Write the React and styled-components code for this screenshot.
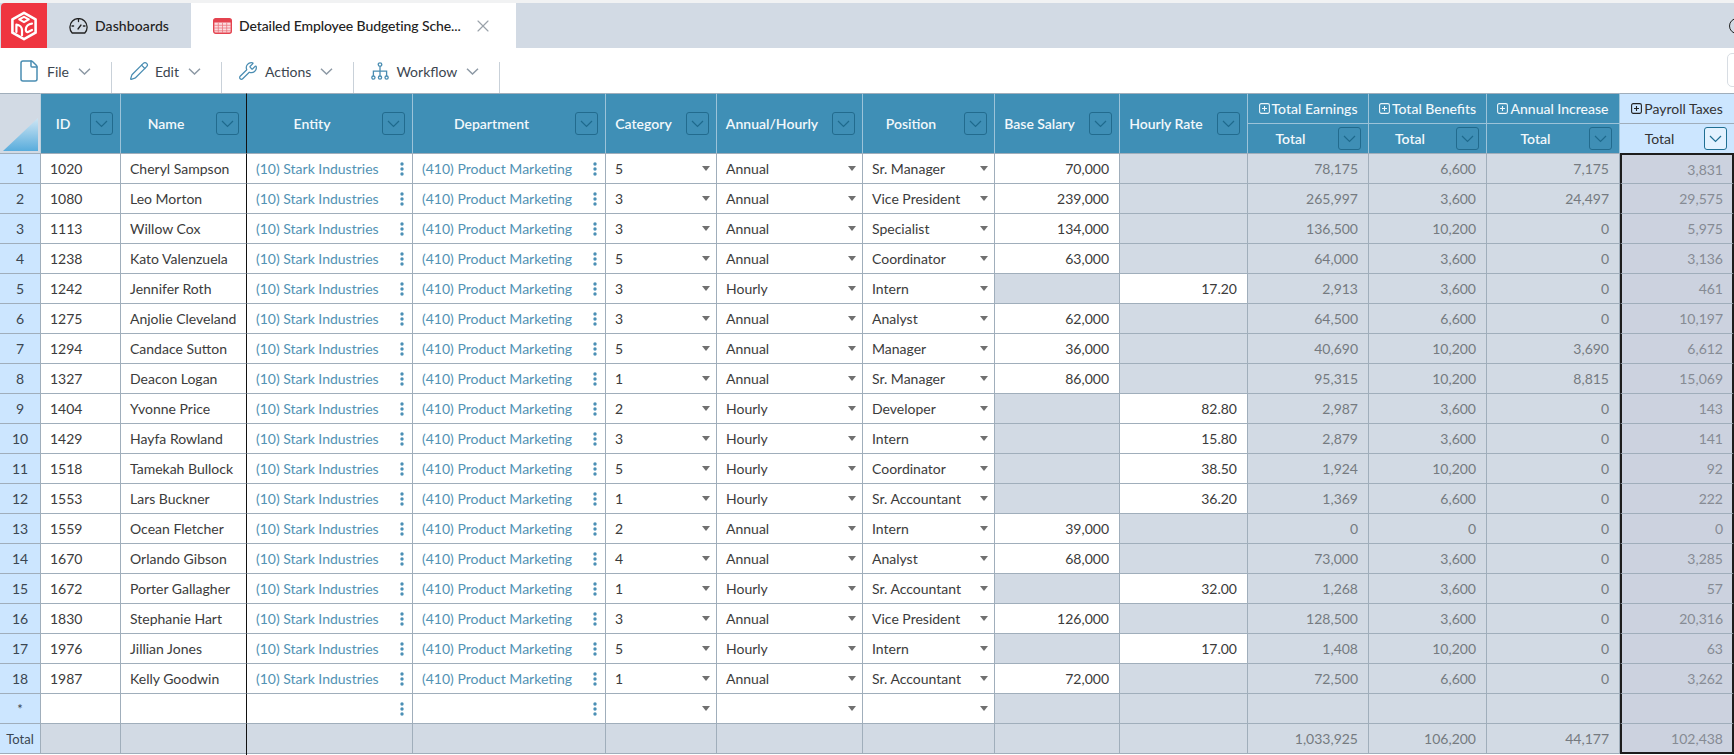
import React from 'react';
import styled, { createGlobalStyle } from 'styled-components';
import { File, Pencil, Wrench, X } from 'lucide-react';

const Global = createGlobalStyle`
  html, body { margin: 0; padding: 0; background: #fff; overflow: hidden; }
  body { font-family: Lato, "Open Sans", sans-serif; font-size: 14px; color: #333; }
`;

const Page = styled.div`
  width: 1734px; height: 755px; overflow: hidden; display: flex; flex-direction: column;
  padding-top: 3px; box-sizing: border-box; background: #fff;
  box-shadow: inset 0 3px 0 #f1f2f3;
`;
const TabBar = styled.div`
  height: 45px; display: flex; align-items: stretch; background: #d2dae4; flex: none; position: relative;
`;
const LogoBox = styled.div`
  width: 46px; margin-left: 1px; box-sizing: border-box; background: #ef3540; border-top-left-radius: 4px;
  display: flex; align-items: center; justify-content: center;
`;
const Tab = styled.div`
  display: flex; align-items: center; box-sizing: border-box;
  width: ${p => p.$w}px; padding-left: ${p => p.$pad}px; gap: ${p => p.$gap}px;
  background: ${p => p.$active ? '#fff' : '#d2dae4'};
  font-size: 14px; font-weight: 500; color: #222;
  letter-spacing: ${p => p.$active ? '-0.1px' : '0.1px'};
`;
const TabClose = styled.span`
  display: flex; margin-left: 5px; color: #9aa2aa;
`;
const TabSpacer = styled.div` flex: 1; `;
const Ring = styled.div`
  width: 16px; height: 16px; border-radius: 50%; border: 1.6px solid #222; flex: none;
  align-self: center; margin-right: -11px; box-sizing: border-box;
`;
const Toolbar = styled.div`
  height: 45px; flex: none; display: flex; align-items: flex-end; background: #fff; color: #3c4650;
`;
const ToolItem = styled.div`
  height: 31px; box-sizing: border-box; padding: 0 ${p => p.$end || 18}px 13px ${p => p.$pad}px;
  border-right: 1px solid #c9d1d9; display: flex; align-items: center;
  font-size: 14px;
  svg.ti { margin-right: ${p => p.$gap || 7}px; color: #4a8db2; flex: none; }
`;
const ToolChevron = styled.svg` margin-left: 9px; flex: none; `;
const ToolSpacer = styled.div` flex: 1; `;
const SearchBox = styled.div`
  width: 60px; height: 34px; margin-right: -53px; margin-bottom: 6px; box-sizing: border-box;
  border: 1px solid #d8dde3; border-radius: 5px; flex: none;
`;
const Grid = styled.div`
  display: grid; flex: none; width: 1734px;
  grid-template-columns: 41px 80px 126px 166px 193px 111px 146px 132px 125px 128px 121px 118px 133px 114px;
  grid-template-rows: repeat(21, 30px) 31px;
  font-size: 14px; color: #3b3b3b;
`;
const Cell = styled.div`
  box-sizing: border-box; border-top: 1px solid #a0aebb; border-right: 1px solid #a0aebb;
  display: flex; align-items: center; min-width: 0; white-space: nowrap; position: relative;
  background: ${p => p.$grey ? '#d2dae4' : '#fff'};
  ${p => p.$divider && 'border-right-color: #111;'}
  ${p => p.$last && 'border-bottom: 1px solid #a0aebb;'}
`;
const Corner = styled.div`
  grid-row: span 2; box-sizing: border-box; background: #d2dae4; display: flex; align-items: flex-end;
  border-top: 1px solid #a0aebb; border-right: 1px solid #bcd0de; padding: 0 2px 2px 3px;
`;
const CornerTriangle = styled.div`
  width: 35px; height: 33px;
  background: linear-gradient(#cfe6f4, #58acdc);
  clip-path: polygon(0 100%, 100% 0, 100% 100%);
`;
const HeadCell = styled.div`
  box-sizing: border-box; display: flex; align-items: center; padding-right: 7px;
  grid-row: ${p => p.$span ? 'span 2' : 'auto'};
  background: ${p => p.$sel ? '#cce6ff' : '#3f8fb6'};
  color: ${p => p.$sel ? '#333' : '#f2f8fb'};
  border-right: 1px solid ${p => p.$divider ? '#111' : p.$sel ? '#a0aebb' : '#9cc3d9'};
  border-top: 1px solid ${p => p.$top ? '#a0aebb' : (p.$sel ? '#a0aebb' : '#9cc3d9')};
  font-weight: 600;
  ${p => p.$sel && 'font-weight: 400; border-right: 0;'}
`;
const HeadLabel = styled.span` flex: 1; text-align: center; white-space: nowrap; margin-right: 5px; `;
const GroupCell = styled(HeadCell)`
  justify-content: center; padding: 0; gap: 2px; font-weight: ${p => p.$sel ? 400 : 500};
`;
const PlusBox = styled.svg` flex: none; `;
const FilterButton = styled.div`
  width: 23px; height: 23px; flex: none; box-sizing: border-box; border-radius: 3px;
  border: 1px solid ${p => p.$sel ? '#1f6f93' : '#226b8e'};
  display: flex; align-items: center; justify-content: center;
  background: ${p => p.$sel ? '#e3f2ff' : 'transparent'};
  color: ${p => p.$sel ? '#1f6f93' : '#1f6a8d'};
`;
const RowHead = styled(Cell)`
  background: #cce6ff; justify-content: center; color: #3b4651;
  ${p => p.$small && 'font-size: 13px;'}
`;
const TextCell = styled(Cell)` padding-left: 9px; `;
const LinkCell = styled(Cell)`
  justify-content: space-between; padding: 0 8px 0 9px; color: #5192b4;
`;
const Dots = styled.svg` flex: none; margin-left: auto; `;
const SelectCell = styled(Cell)`
  justify-content: space-between; padding: 0 6px 0 9px;
`;
const Caret = styled.span`
  width: 0; height: 0; flex: none; margin-left: auto;
  border-left: 4.5px solid transparent; border-right: 4.5px solid transparent; border-top: 5.5px solid #707070;
`;
const NumCell = styled(Cell)`
  justify-content: flex-end; padding-right: 10px; color: ${p => p.$grey ? '#757a80' : '#3b3b3b'};
`;
const TaxCell = styled(Cell)`
  justify-content: flex-end; padding-right: 9px; color: #868b94; background: #ccd2df;
  border-left: 2px solid #1c1c1c; border-right: 2px solid #1c1c1c;
  ${p => p.$first && 'border-top: 2px solid #1c1c1c;'}
  ${p => p.$last && 'border-bottom: 2px solid #1c1c1c;'}
`;
const DividerTail = styled.span`
  position: absolute; right: -1px; top: 100%; width: 1px; height: 3px; background: #111;
`;

const Chevron = ({ size = 13, color = '#8d99a5' }) => (
  <ToolChevron width={size} height={7} viewBox="0 0 13 7" fill="none">
    <path d="M1 .8l5.5 5.2L12 .8" stroke={color} strokeWidth="1.5" />
  </ToolChevron>
);
const BtnChevron = () => (
  <svg width="13" height="8" viewBox="0 0 13 8" fill="none"><path d="M1 1l5.5 5.5L12 1" stroke="currentColor" strokeWidth="1.2" /></svg>
);
const Filter = ({ sel }) => <FilterButton $sel={sel}><BtnChevron /></FilterButton>;
const Plus = ({ color }) => (
  <PlusBox width="11" height="11" viewBox="0 0 11 11" fill="none" stroke={color}>
    <rect x=".6" y=".6" width="9.8" height="9.8" rx="1.6" strokeWidth="1.1" />
    <path d="M5.5 3v5M3 5.5h5" strokeWidth="1.1" />
  </PlusBox>
);
const DotsIcon = () => (
  <Dots width="4" height="14" viewBox="0 0 4 14" fill="#4a8fb5">
    <circle cx="2" cy="2" r="1.7" /><circle cx="2" cy="7" r="1.7" /><circle cx="2" cy="12" r="1.7" />
  </Dots>
);
const Logo = () => (
  <svg width="28" height="30" viewBox="0 0 28 30" fill="none" stroke="#fff" strokeWidth="2.6" strokeLinejoin="round" strokeLinecap="round">
    <path d="M14 1.8L25.6 8.3V21.7L14 28.2 2.4 21.7V8.3Z" />
    <path d="M9.2 8.4L14 5.8l4.8 2.6L14 11.2Z" strokeWidth="2" />
    <path d="M6.4 21v-7.4c3.4.2 5.6 2.8 5.6 5.6v5" strokeWidth="2.2" />
    <path d="M22 12.6c-3.8.4-6.2 3-6.2 6 0 2 1 2.8 2.2 2.4l4-2" strokeWidth="2.2" />
  </svg>
);
const GaugeIcon = () => (
  <svg width="19" height="16" viewBox="0 0 19 16" fill="none" stroke="#222" strokeWidth="1.3" strokeLinecap="round">
    <path d="M3.2 15A8.6 8.6 0 1 1 15.8 15Z" />
    <path d="M9.5 1.5v2M3 8h1.6M14.4 8H16M9 11l3-4" />
  </svg>
);
const SheetIcon = () => (
  <svg width="19" height="16" viewBox="0 0 19 16" fill="none">
    <rect x=".7" y=".7" width="17.6" height="14.6" rx="2" fill="#fbdde0" stroke="#e4434f" strokeWidth="1.4" />
    <path d="M.7 2.7a2 2 0 0 1 2-2h13.6a2 2 0 0 1 2 2V4.6H.7Z" fill="#e4434f" />
    <path d="M1 7.3h17M1 10h17M1 12.8h17M5.3 4.6V15M9.5 4.6V15M13.7 4.6V15" stroke="#ec7680" strokeWidth=".8" />
  </svg>
);
const WorkflowIcon = () => (
  <svg className="ti" width="18" height="18" viewBox="0 0 18 18" fill="none" stroke="currentColor" strokeWidth="1.3">
    <circle cx="9" cy="2.6" r="1.8" />
    <path d="M9 4.4V14M2.4 14V9.2h13.2V14" />
    <circle cx="2.4" cy="15.6" r="1.6" /><circle cx="9" cy="15.6" r="1.6" /><circle cx="15.6" cy="15.6" r="1.6" />
  </svg>
);

const rows = [
  [1020,'Cheryl Sampson',5,'Annual','Sr. Manager','70,000','', '78,175','6,600','7,175','3,831'],
  [1080,'Leo Morton',3,'Annual','Vice President','239,000','', '265,997','3,600','24,497','29,575'],
  [1113,'Willow Cox',3,'Annual','Specialist','134,000','', '136,500','10,200','0','5,975'],
  [1238,'Kato Valenzuela',5,'Annual','Coordinator','63,000','', '64,000','3,600','0','3,136'],
  [1242,'Jennifer Roth',3,'Hourly','Intern','', '17.20','2,913','3,600','0','461'],
  [1275,'Anjolie Cleveland',3,'Annual','Analyst','62,000','', '64,500','6,600','0','10,197'],
  [1294,'Candace Sutton',5,'Annual','Manager','36,000','', '40,690','10,200','3,690','6,612'],
  [1327,'Deacon Logan',1,'Annual','Sr. Manager','86,000','', '95,315','10,200','8,815','15,069'],
  [1404,'Yvonne Price',2,'Hourly','Developer','', '82.80','2,987','3,600','0','143'],
  [1429,'Hayfa Rowland',3,'Hourly','Intern','', '15.80','2,879','3,600','0','141'],
  [1518,'Tamekah Bullock',5,'Hourly','Coordinator','', '38.50','1,924','10,200','0','92'],
  [1553,'Lars Buckner',1,'Hourly','Sr. Accountant','', '36.20','1,369','6,600','0','222'],
  [1559,'Ocean Fletcher',2,'Annual','Intern','39,000','', '0','0','0','0'],
  [1670,'Orlando Gibson',4,'Annual','Analyst','68,000','', '73,000','3,600','0','3,285'],
  [1672,'Porter Gallagher',1,'Hourly','Sr. Accountant','', '32.00','1,268','3,600','0','57'],
  [1830,'Stephanie Hart',3,'Annual','Vice President','126,000','', '128,500','3,600','0','20,316'],
  [1976,'Jillian Jones',5,'Hourly','Intern','', '17.00','1,408','10,200','0','63'],
  [1987,'Kelly Goodwin',1,'Annual','Sr. Accountant','72,000','', '72,500','6,600','0','3,262'],
];

const singleHeads = ['ID','Name','Entity','Department','Category','Annual/Hourly','Position','Base Salary','Hourly Rate'];
const groups = ['Total Earnings','Total Benefits','Annual Increase','Payroll Taxes'];

export default function App() {
  return (
    <Page>
      <Global />
      <TabBar>
        <LogoBox><Logo /></LogoBox>
        <Tab $w={144} $pad={22} $gap={7}><GaugeIcon />Dashboards</Tab>
        <Tab $w={325} $pad={22} $gap={7} $active><SheetIcon />Detailed Employee Budgeting Sche...<TabClose><X size={20} strokeWidth={1.4} /></TabClose></Tab>
        <TabSpacer />
        <Ring />
      </TabBar>
      <Toolbar>
        <ToolItem $pad={17} $end={20} $gap={6}><File className="ti" size={24} strokeWidth={1.5} />File<Chevron /></ToolItem>
        <ToolItem $pad={17} $end={20} $gap={6}><Pencil className="ti" size={20} strokeWidth={1.5} />Edit<Chevron /></ToolItem>
        <ToolItem $pad={16} $end={20} $gap={7}><Wrench className="ti" size={20} strokeWidth={1.5} />Actions<Chevron /></ToolItem>
        <ToolItem $pad={17} $end={20} $gap={7}><WorkflowIcon />Workflow<Chevron /></ToolItem>
        <ToolSpacer />
        <SearchBox />
      </Toolbar>
      <Grid>
        <Corner><CornerTriangle /></Corner>
        {singleHeads.map(h => (
          <HeadCell key={h} $span $top $divider={h === 'Name'}><HeadLabel>{h}</HeadLabel><Filter /></HeadCell>
        ))}
        {groups.map((g, i) => (
          <GroupCell key={g} $top $sel={i === 3}><Plus color={i === 3 ? '#222' : '#eef6fa'} />{g}</GroupCell>
        ))}
        {groups.map((g, i) => (
          <HeadCell key={g} $sel={i === 3}><HeadLabel>Total</HeadLabel><Filter sel={i === 3} /></HeadCell>
        ))}
        {rows.map((r, i) => (
          <React.Fragment key={r[0]}>
            <RowHead>{i + 1}</RowHead>
            <TextCell>{r[0]}</TextCell>
            <TextCell $divider>{r[1]}</TextCell>
            <LinkCell>(10) Stark Industries<DotsIcon /></LinkCell>
            <LinkCell>(410) Product Marketing<DotsIcon /></LinkCell>
            <SelectCell>{r[2]}<Caret /></SelectCell>
            <SelectCell>{r[3]}<Caret /></SelectCell>
            <SelectCell>{r[4]}<Caret /></SelectCell>
            <NumCell $grey={!r[5]}>{r[5]}</NumCell>
            <NumCell $grey={!r[6]}>{r[6]}</NumCell>
            <NumCell $grey>{r[7]}</NumCell>
            <NumCell $grey>{r[8]}</NumCell>
            <NumCell $grey>{r[9]}</NumCell>
            <TaxCell $first={i === 0}>{r[10]}</TaxCell>
          </React.Fragment>
        ))}
        <RowHead $small>*</RowHead>
        <TextCell />
        <TextCell $divider />
        <LinkCell><DotsIcon /></LinkCell>
        <LinkCell><DotsIcon /></LinkCell>
        <SelectCell><Caret /></SelectCell>
        <SelectCell><Caret /></SelectCell>
        <SelectCell><Caret /></SelectCell>
        <NumCell $grey />
        <NumCell $grey />
        <NumCell $grey />
        <NumCell $grey />
        <NumCell $grey />
        <TaxCell />
        <RowHead $last $small>Total</RowHead>
        <Cell $grey $last />
        <Cell $grey $last $divider><DividerTail /></Cell>
        <Cell $grey $last />
        <Cell $grey $last />
        <Cell $grey $last />
        <Cell $grey $last />
        <Cell $grey $last />
        <Cell $grey $last />
        <Cell $grey $last />
        <NumCell $grey $last>1,033,925</NumCell>
        <NumCell $grey $last>106,200</NumCell>
        <NumCell $grey $last>44,177</NumCell>
        <TaxCell $last>102,438</TaxCell>
      </Grid>
    </Page>
  );
}
